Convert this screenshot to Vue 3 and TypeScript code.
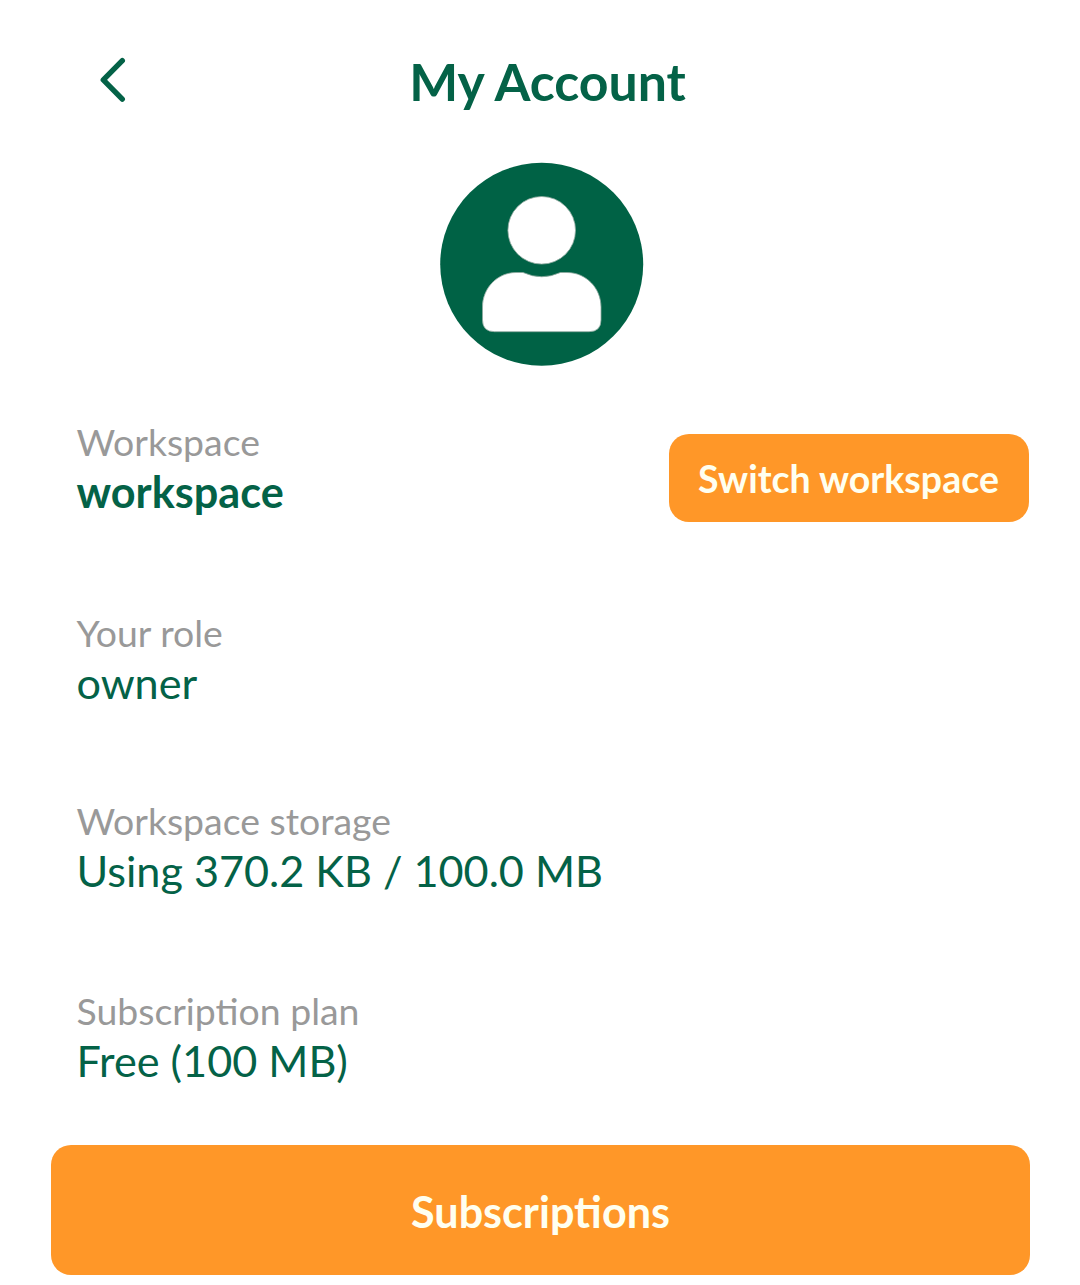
<script setup lang="ts">
interface Field {
  key: string
  label: string
  value: string
}

const fields: Field[] = [
  { key: 'role', label: 'Your role', value: 'owner' },
  { key: 'storage', label: 'Workspace storage', value: 'Using 370.2 KB / 100.0 MB' },
  { key: 'plan', label: 'Subscription plan', value: 'Free (100 MB)' },
]
</script>

<template>
  <main class="screen">
    <header class="header">
      <button class="back" aria-label="Back">
        <svg width="28" height="46" viewBox="0 0 28 46" fill="none">
          <path d="M23.300 3.700 L4.300 22.900 L23.300 42.100" stroke="#046247" stroke-width="5.400" stroke-linecap="round" stroke-linejoin="round" />
        </svg>
      </button>
      <h1 class="title">My Account</h1>
    </header>

    <svg class="avatar" width="204" height="204" viewBox="0 0 204 204">
      <circle cx="101.700" cy="102.300" r="101.500" fill="#006245" />
      <g fill="#fff" stroke="#8fa99f" stroke-width="0.800">
        <circle cx="101.700" cy="68.300" r="33.800" />
        <path d="M76 110.500 H83 Q101.700 119 120.500 110.500 H127 C146 110.500 161 126 161 145 V158 Q161 169.700 149 169.700 H54.500 Q42.500 169.700 42.500 158 V145 C42.500 126 57.500 110.500 76 110.500 Z" />
      </g>
    </svg>

    <section class="row workspace">
      <div>
        <div class="label">Workspace</div>
        <div class="value strong">workspace</div>
      </div>
      <button class="switch">Switch workspace</button>
    </section>

    <section v-for="field in fields" :key="field.key" class="row" :class="field.key">
      <div>
        <div class="label">{{ field.label }}</div>
        <div class="value">{{ field.value }}</div>
      </div>
    </section>

    <button class="subscriptions">Subscriptions</button>
  </main>
</template>

<style>
body {
  margin: 0;
  background: #fff;
}
</style>

<style scoped>
.screen {
  box-sizing: border-box;
  width: 1080px;
  height: 1285px;
  overflow: hidden;
  display: flex;
  flex-direction: column;
  background: #fff;
  color: #046247;
  font-family: Lato, sans-serif;
}
button {
  border: 0;
  padding: 0;
  margin: 0;
  font-family: inherit;
  background: none;
}
.header {
  display: grid;
  grid-template-columns: 99px 1fr 84px;
  height: 162px;
  flex: none;
}
.back {
  width: 28px;
  height: 46px;
  margin: 57px 0 0 99px;
  grid-area: 1 / 1;
}
.back svg {
  display: block;
}
.title {
  grid-area: 1 / 2;
  margin: 50px 0 0;
  font-size: 51.8px;
  line-height: 62px;
  font-weight: 700;
  text-align: center;
}
.avatar {
  flex: none;
  margin-left: 440px;
}
.row {
  flex: none;
  box-sizing: border-box;
  display: flex;
  justify-content: space-between;
  align-items: flex-start;
  padding: 0 51.5px 0 76.5px;
}
.workspace {
  height: 191px;
  margin-top: 53px;
}
.role {
  height: 188px;
}
.storage {
  height: 190px;
}
.plan {
  height: 157px;
}
.label {
  font-size: 37.4px;
  line-height: 45px;
  padding-bottom: 1px;
  color: #999;
}
.value {
  font-size: 43.2px;
  line-height: 52px;
}
.strong {
  font-weight: 700;
}
.switch {
  width: 360px;
  height: 88px;
  margin-top: 15px;
  padding-top: 1px;
  border-radius: 20px;
  background: #ff9728;
  color: #fffff0;
  font-size: 37.5px;
  font-weight: 700;
}
.subscriptions {
  flex: none;
  width: 979px;
  height: 130px;
  margin-left: 51px;
  padding-top: 1px;
  border-radius: 20px;
  background: #ff9728;
  color: #fffff0;
  font-size: 43.15px;
  font-weight: 700;
}
</style>
